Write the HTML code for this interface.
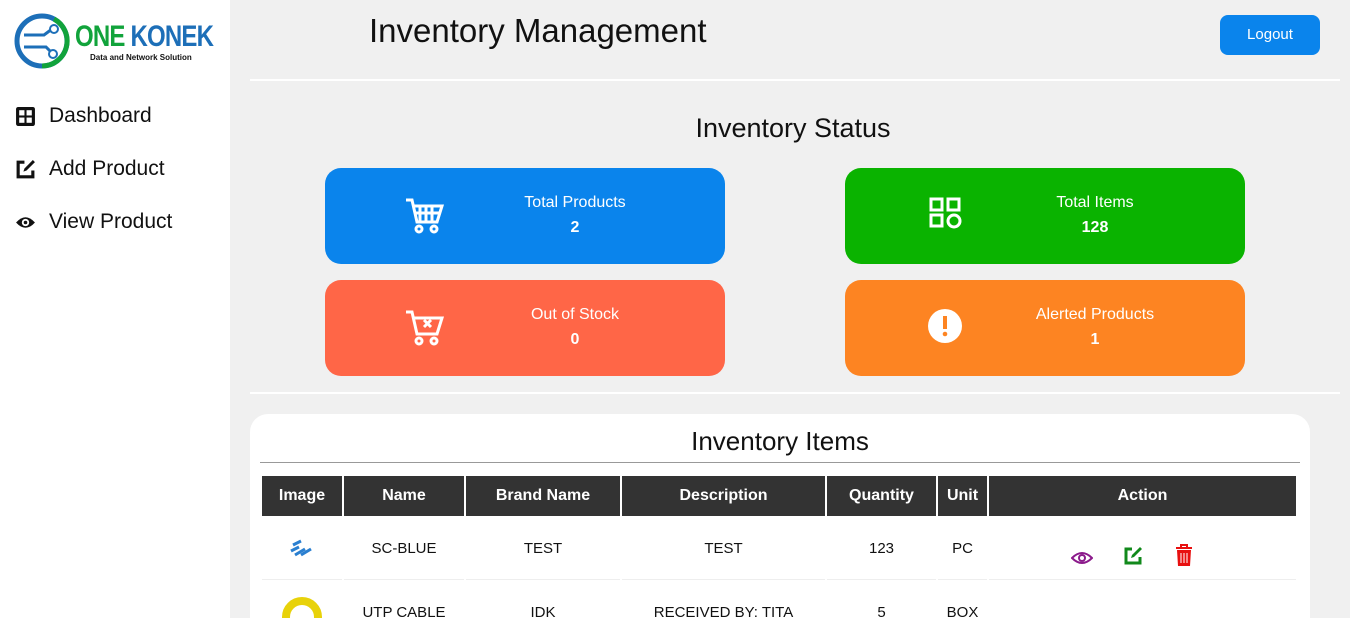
<!DOCTYPE html>
<html style="overflow:hidden"><head><style>
*{margin:0;padding:0;box-sizing:border-box}
html,body{width:1350px;height:618px;overflow:hidden}
body{background:#f0f0f0;font-family:"Liberation Sans",sans-serif;position:relative;color:#111}
.side{position:absolute;left:0;top:0;width:230px;height:618px;background:#fff}
.nav{position:absolute;left:15px;font-size:21px;display:flex;align-items:center;white-space:nowrap}
.nav svg{margin-right:13px;flex-shrink:0;width:21px;height:21px}
.abs{position:absolute}
.card{position:absolute;width:400px;height:96px;border-radius:16px;color:#fff;font-size:16px;text-align:center}
.card .t{position:absolute;top:26px;width:200px;left:150px}
.card .v{position:absolute;top:51px;width:200px;left:150px;font-weight:bold}
.card svg{position:absolute;left:80px;top:28px}
.clip{position:absolute;left:250px;top:414px;width:1060px;height:204px;background:#fff;border-radius:18px 18px 0 0;overflow:hidden}
table{position:absolute;left:10px;top:60px;border-collapse:separate;border-spacing:2px;font-size:15px}
th{background:#333;color:#fff;height:40px;font-size:16px}
td{height:62px;text-align:center;border-bottom:1px solid #eee;background:#fff}
</style></head><body>
<div class="side">
 <svg class="abs" style="left:14px;top:13px" width="56" height="56" viewBox="0 0 56 56"><circle cx="28" cy="28" r="25" fill="none" stroke="#1d6fb8" stroke-width="5"/><path d="M40 6A25 25 0 0 1 28 53" fill="none" stroke="#11a33b" stroke-width="5"/><path d="M10 22h20l8-6M10 34h22l6 6" stroke="#1d6fb8" stroke-width="3" fill="none"/><circle cx="40" cy="16" r="4" fill="#fff" stroke="#1d6fb8" stroke-width="2"/><circle cx="39" cy="41" r="4" fill="#fff" stroke="#1d6fb8" stroke-width="2"/></svg>
 <div class="abs" style="left:75px;top:20px;font-size:30px;font-weight:bold;white-space:nowrap;letter-spacing:-1px;transform:scaleX(.8);transform-origin:left"><span style="color:#11a33b">ONE</span> <span style="color:#1d6fb8">KONEK</span></div>
 <div class="abs" style="left:90px;top:53px;font-size:8px;font-weight:bold;white-space:nowrap">Data and Network Solution</div>
 <div class="nav" style="top:104px"><svg viewBox="0 0 20 20"><rect x="1" y="1" width="18" height="18" rx="2" fill="#111"/><rect x="4" y="4" width="5" height="5" fill="#fff"/><rect x="11" y="4" width="5" height="5" fill="#fff"/><rect x="4" y="11" width="5" height="5" fill="#fff"/><rect x="11" y="11" width="5" height="5" fill="#fff"/></svg>Dashboard</div>
 <div class="nav" style="top:157px"><svg viewBox="0 0 20 20"><path d="M9 3H3v14h14v-6" fill="none" stroke="#111" stroke-width="3"/><path d="M8 12l1-3 8-8 2 2-8 8z" fill="#111"/></svg>Add Product</div>
 <div class="nav" style="top:210px"><svg viewBox="0 0 20 20"><path d="M1 10Q10 0 19 10Q10 20 1 10z" fill="#111"/><circle cx="10" cy="10" r="3.5" fill="#fff"/><circle cx="10" cy="10" r="1.7" fill="#111"/></svg>View Product</div>
</div>
<div class="abs" style="left:369px;top:12px;font-size:33px">Inventory Management</div>
<div class="abs" style="left:1220px;top:15px;width:100px;height:40px;background:#0a84ec;border-radius:8px;color:#fff;font-size:15px;text-align:center;line-height:40px">Logout</div>
<div class="abs" style="left:250px;top:79px;width:1090px;height:2px;background:#fff"></div>
<div class="abs" style="left:250px;top:113px;width:1086px;text-align:center;font-size:27px">Inventory Status</div>
<div class="card" style="left:325px;top:168px;background:#0a84ec"><svg width="40" height="40" viewBox="0 0 40 40" fill="none" stroke="#fff" stroke-width="3"><path d="M1 4h6l5 22h20l5-16H9"/><path d="M15 10v16M21 10v16M27 10v16M11 17h25"/><circle cx="14" cy="33" r="3"/><circle cx="29" cy="33" r="3"/></svg><div class="t">Total Products</div><div class="v">2</div></div>
<div class="card" style="left:845px;top:168px;background:#0ab300"><svg width="40" height="40" viewBox="0 0 40 40" fill="none" stroke="#fff" stroke-width="3"><rect x="6" y="3" width="11" height="11"/><rect x="23" y="3" width="11" height="11"/><rect x="6" y="19" width="11" height="11"/><circle cx="29" cy="25" r="6"/></svg><div class="t">Total Items</div><div class="v">128</div></div>
<div class="card" style="left:325px;top:280px;background:#ff6647"><svg width="40" height="40" viewBox="0 0 40 40" fill="none" stroke="#fff" stroke-width="3"><path d="M1 4h6l5 22h20l5-16H9"/><path d="M19 12l7 7M26 12l-7 7"/><circle cx="14" cy="33" r="3"/><circle cx="29" cy="33" r="3"/></svg><div class="t">Out of Stock</div><div class="v">0</div></div>
<div class="card" style="left:845px;top:280px;background:#fd8422"><svg width="40" height="40" viewBox="0 0 40 40"><circle cx="20" cy="18" r="17" fill="#fff"/><rect x="18" y="8" width="4" height="13" fill="#fd8422"/><circle cx="20" cy="26" r="2.3" fill="#fd8422"/></svg><div class="t">Alerted Products</div><div class="v">1</div></div>
<div class="abs" style="left:250px;top:392px;width:1090px;height:2px;background:#fff"></div>
<div class="clip">
<div class="abs" style="left:0;top:12px;width:1060px;text-align:center;font-size:26px">Inventory Items</div>
<div class="abs" style="left:10px;top:48px;width:1040px;height:1px;background:#999"></div>
<table>
<tr><th style="width:80px">Image</th><th style="width:120px">Name</th><th style="width:154px">Brand Name</th><th style="width:203px">Description</th><th style="width:109px">Quantity</th><th style="width:49px">Unit</th><th style="width:307px">Action</th></tr>
<tr><td><svg width="30" height="20" viewBox="0 0 30 20"><path d="M4 14l8-4M8 18l10-6M14 18l10-6M6 8l8-4" stroke="#2a7fd0" stroke-width="3"/></svg></td><td>SC-BLUE</td><td>TEST</td><td>TEST</td><td>123</td><td>PC</td><td style="padding-top:16px"><span style="display:inline-block;width:307px;padding-left:82px;text-align:left">
<svg width="22" height="16" viewBox="0 0 22 16" style="margin-right:30px"><path d="M1 8Q11-2 21 8Q11 18 1 8z" fill="none" stroke="#8b1a8b" stroke-width="2"/><circle cx="11" cy="8" r="3" fill="none" stroke="#8b1a8b" stroke-width="2"/></svg><svg width="20" height="20" viewBox="0 0 20 20" style="margin-right:32px"><path d="M9 3H3v14h14v-6" fill="none" stroke="#11891b" stroke-width="3"/><path d="M8 12l1-3 8-8 2 2-8 8z" fill="#11891b"/></svg><svg width="18" height="22" viewBox="0 0 18 22"><path d="M1 4h16M6 4V1h6v3" stroke="#e81010" stroke-width="2" fill="none"/><path d="M2 6h14l-1 16H3z" fill="#e81010"/><path d="M6 9v10M9 9v10M12 9v10" stroke="#fff" stroke-width="1"/></svg></span></td></tr>
<tr><td><svg width="44" height="40" viewBox="0 0 44 40"><circle cx="22" cy="26" r="16" fill="none" stroke="#e8d20a" stroke-width="8"/></svg></td><td>UTP CABLE</td><td>IDK</td><td>RECEIVED BY: TITA</td><td>5</td><td>BOX</td><td></td></tr>
</table>
</div>
</body></html>
